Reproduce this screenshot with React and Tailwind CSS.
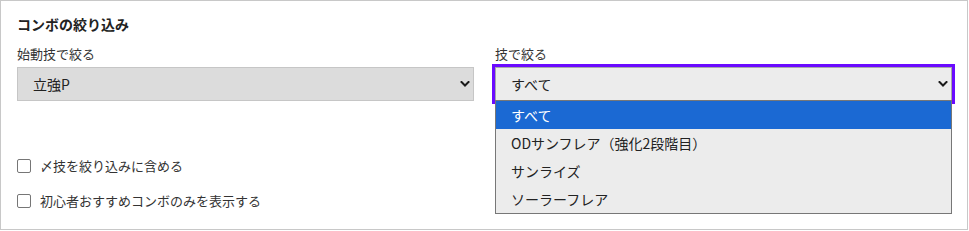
import { useState } from "react";

const moveOptions = [
  "すべて",
  "ODサンフレア（強化2段階目）",
  "サンライズ",
  "ソーラーフレア",
];

function Chevron() {
  return (
    <svg
      viewBox="0 0 10 6"
      className="h-[6px] w-[10px] shrink-0"
      fill="none"
      stroke="#1a1a1a"
      strokeWidth="2"
      strokeLinecap="square"
    >
      <polyline points="1.5,1 5,4.5 8.5,1" />
    </svg>
  );
}

function Checkbox({ label }) {
  return (
    <label className="flex h-[20px] items-center gap-[9px] text-[13px] text-[#333]">
      <span className="h-[14px] w-[14px] rounded-[2px] border border-[#767676] bg-white" />
      {label}
    </label>
  );
}

export default function App() {
  const [selected] = useState(0);

  return (
    <div
      className="h-[230px] w-[968px] border border-[#c8c8c8] bg-white pl-4 pt-[12px]"
      style={{ fontFamily: '"Noto Sans CJK JP", "Noto Sans", sans-serif' }}
    >
      <h3 className="text-[14px] font-bold leading-[22px] text-[#222]">
        コンボの絞り込み
      </h3>

      <div className="mt-[9px] grid grid-cols-[457px_457px] gap-x-[21px]">
        <div>
          <div className="text-[13px] leading-[20px] text-[#333]">始動技で絞る</div>
          <div className="mt-[3px] flex h-[34px] items-center justify-between border border-[#c6c6c6] bg-[#dcdcdc] pl-[15px] pr-[3px] text-[14px] text-[#222]">
            <span>立強P</span>
            <Chevron />
          </div>
        </div>

        <div>
          <div className="text-[13px] leading-[20px] text-[#333]">技で絞る</div>
          <div className="relative mt-[3px]">
            <div className="flex h-[34px] items-center justify-between border border-[#a8a8a8] bg-[#ececec] pl-[15px] pr-[3px] text-[14px] text-[#222] outline-[3px] outline-offset-0 outline-[#6a0aff] outline-solid">
              <span>すべて</span>
              <Chevron />
            </div>
            <ul className="absolute left-0 right-0 top-[33px] z-10 border border-[#777] bg-[#ececec] text-[14px] text-[#222]">
              {moveOptions.map((option, index) => (
                <li
                  key={option}
                  className={
                    index === selected
                      ? "flex h-[28px] items-center bg-[#1b69d3] pl-[15px] text-white"
                      : "flex h-[28px] items-center pl-[15px]"
                  }
                >
                  {option}
                </li>
              ))}
            </ul>
          </div>
        </div>
      </div>

      <div className="mt-[55px] flex flex-col gap-[15px]">
        <Checkbox label="〆技を絞り込みに含める" />
        <Checkbox label="初心者おすすめコンボのみを表示する" />
      </div>
    </div>
  );
}
